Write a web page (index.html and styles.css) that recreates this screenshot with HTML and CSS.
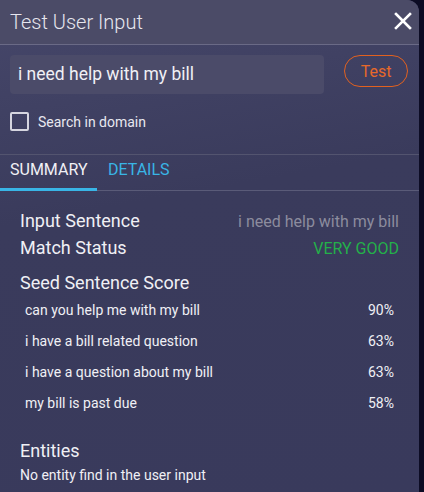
FILE: index.html
```html
<!DOCTYPE html>
<html>
<head>
<meta charset="utf-8">
<link rel="stylesheet" href="styles.css">
</head>
<body>
<div class="panel">
  <div class="header">
    <div class="title">Test User Input</div>
    <svg class="close" width="18" height="18" viewBox="0 0 18 18"><path d="M2 2 L16 16 M16 2 L2 16" stroke="#fff" stroke-width="2.6" stroke-linecap="square"/></svg>
  </div>
  <div class="body">
    <div class="input-row">
      <div class="input">i need help with my bill</div>
      <button class="test">Test</button>
    </div>
    <label class="check"><span class="box"></span>Search in domain</label>
  </div>
  <div class="tabs">
    <div class="tab active">SUMMARY</div>
    <div class="tab">DETAILS</div>
  </div>
  <div class="summary">
    <div class="kv"><span>Input Sentence</span><span class="muted">i need help with my bill</span></div>
    <div class="kv"><span>Match Status</span><span class="good">VERY GOOD</span></div>
    <div class="section">Seed Sentence Score</div>
    <div class="scores">
      <div class="score"><span>can you help me with my bill</span><span>90%</span></div>
      <div class="score"><span>i have a bill related question</span><span>63%</span></div>
      <div class="score"><span>i have a question about my bill</span><span>63%</span></div>
      <div class="score"><span>my bill is past due</span><span>58%</span></div>
    </div>
    <div class="section entities">Entities</div>
    <div class="note">No entity find in the user input</div>
  </div>
</div>
</body>
</html>
```
FILE: styles.css
```css
* { box-sizing: border-box; }
html, body { margin: 0; height: 100%; }
body {
  background: #0c0c24;
  font-family: Roboto, "Liberation Sans", sans-serif;
  color: #fff;
  overflow: hidden;
}
.panel {
  width: 419px;
  height: 492px;
  border-top-right-radius: 12px;
  background: linear-gradient(170deg, #46476a 0%, #3a3b5c 40%, #393a5c 100%);
  overflow: hidden;
}
.header {
  height: 45px;
  display: flex;
  align-items: center;
  justify-content: space-between;
  padding: 0 7px 1px 10px;
  background: #4b4b67;
  border-bottom: 1px solid #6a6a86;
}
.title {
  font-size: 20px;
  color: #e6e6ee;
  font-weight: 300;
}
.close { margin-top: -2px; }
.body { padding: 10px 10px 0 10px; }
.input-row {
  display: flex;
  align-items: flex-start;
  gap: 20px;
}
.input {
  width: 314px;
  height: 39px;
  background: #4b4b69;
  border-radius: 4px;
  font-size: 17.5px;
  line-height: 20px;
  color: #f0f0f5;
  padding: 9px 0 0 8px;
}
.test {
  width: 64px;
  height: 32px;
  border: 1.5px solid #e2611f;
  border-radius: 16px;
  background: transparent;
  color: #e8692a;
  font-family: inherit;
  font-size: 16px;
  padding: 0;
}
.check {
  display: flex;
  align-items: center;
  gap: 9px;
  margin-top: 18px;
  font-size: 14px;
  color: #e8e8f0;
}
.box {
  width: 19px;
  height: 19px;
  border: 2px solid #d6d6e0;
  border-radius: 2px;
}
.tabs {
  margin-top: 23px;
  display: flex;
  border-top: 1px solid #53546f;
  border-bottom: 1px solid #5a5b78;
}
.tab {
  font-size: 16px;
  line-height: 18px;
  padding: 6px 0 9px 0;
  color: #39b5e6;
  margin-left: 11px;
}
.tab.active {
  color: #f0f0f5;
  width: 97px;
  margin-left: 0;
  padding-left: 10px;
  border-bottom: 3px solid #39b5e6;
  margin-bottom: -1px;
}
.summary { padding: 17px 20px 0 20px; }
.kv {
  display: flex;
  justify-content: space-between;
  align-items: baseline;
  font-size: 18px;
  line-height: 26px;
  color: #f0f0f5;
}
.kv span:last-child { font-size: 16px; }
.muted { color: #8c8c9e; }
.good { color: #24b04a; }
.section {
  font-size: 18px;
  margin-top: 10px;
  line-height: 22px;
  color: #f0f0f5;
}
.scores { padding: 0 5px; margin-top: 1px; }
.score {
  display: flex;
  justify-content: space-between;
  font-size: 14px;
  line-height: 31px;
  color: #f0f0f5;
}
.entities { margin-top: 21px; }
.note {
  font-size: 14px;
  line-height: 18px;
  margin-top: 4px;
  color: #f0f0f5;
}
```
